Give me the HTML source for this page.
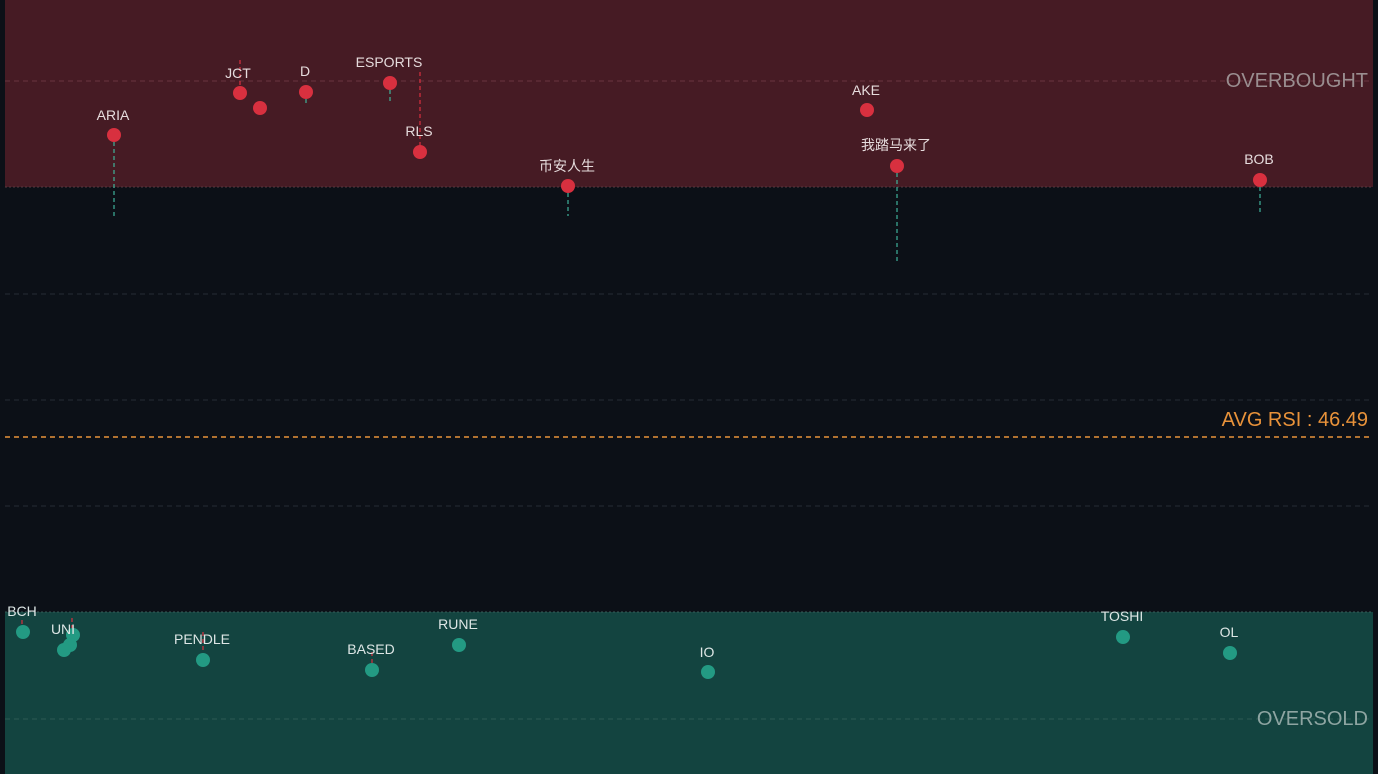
<!DOCTYPE html><html><head><meta charset="utf-8"><style>html,body{margin:0;padding:0;background:#0c1017;overflow:hidden}svg{display:block}text{font-family:"Liberation Sans","Noto Sans CJK SC",sans-serif}</style></head><body>
<svg width="1378" height="774" xmlns="http://www.w3.org/2000/svg">
<rect width="1378" height="774" fill="#0c1017"/>
<rect x="5" y="0" width="1368" height="187" fill="#461b24"/>
<line x1="5" y1="187" x2="1373" y2="187" stroke="#5a3a40" stroke-dasharray="2 2"/>
<rect x="5" y="612" width="1368" height="162" fill="#134440"/>
<line x1="5" y1="612" x2="1373" y2="612" stroke="#3a5e5a" stroke-dasharray="2 2"/>
<g stroke-dasharray="5 4" stroke-width="1">
<line x1="5" y1="81" x2="1373" y2="81" stroke="#6a3540"/>
<line x1="5" y1="294" x2="1373" y2="294" stroke="#262c34"/>
<line x1="5" y1="400" x2="1373" y2="400" stroke="#262c34"/>
<line x1="5" y1="506" x2="1373" y2="506" stroke="#262c34"/>
<line x1="5" y1="719" x2="1373" y2="719" stroke="#2d5a55"/>
<line x1="5" y1="437" x2="1373" y2="437" stroke="#e8923a" stroke-width="1.5"/>
</g>
<g font-size="20" text-anchor="end">
<text x="1368" y="87" fill="#9a8e90">OVERBOUGHT</text>
<text x="1368" y="426" fill="#e8923a">AVG RSI : 46.49</text>
<text x="1368" y="725" fill="#8ea5a2">OVERSOLD</text>
</g>
<g stroke-dasharray="4 3" stroke-width="1.2">
<line x1="114" y1="135" x2="114" y2="218" stroke="#3fb29a"/>
<line x1="568" y1="186" x2="568" y2="216" stroke="#3fb29a"/>
<line x1="897" y1="166" x2="897" y2="262" stroke="#3fb29a"/>
<line x1="1260" y1="180" x2="1260" y2="212" stroke="#3fb29a"/>
<line x1="306" y1="92" x2="306" y2="105" stroke="#3fb29a"/>
<line x1="390" y1="83" x2="390" y2="103" stroke="#3fb29a"/>
<line x1="420" y1="72" x2="420" y2="152" stroke="#d8303f"/>
<line x1="240" y1="60" x2="240" y2="93" stroke="#d8303f"/>
<line x1="22" y1="620" x2="22" y2="631" stroke="#d8303f"/>
<line x1="72" y1="618" x2="72" y2="645" stroke="#d8303f"/>
<line x1="203" y1="632" x2="203" y2="659" stroke="#d8303f"/>
<line x1="372" y1="652" x2="372" y2="669" stroke="#d8303f"/>
</g>
<g fill="#d8303f">
<circle cx="114" cy="135" r="7"/><circle cx="240" cy="93" r="7"/><circle cx="260" cy="108" r="7"/>
<circle cx="306" cy="92" r="7"/><circle cx="390" cy="83" r="7"/><circle cx="420" cy="152" r="7"/>
<circle cx="568" cy="186" r="7"/><circle cx="867" cy="110" r="7"/><circle cx="897" cy="166" r="7"/><circle cx="1260" cy="180" r="7"/>
</g>
<g fill="#239a83">
<circle cx="23" cy="632" r="7"/><circle cx="73" cy="635" r="7"/><circle cx="70" cy="645" r="7"/><circle cx="64" cy="650" r="7"/>
<circle cx="203" cy="660" r="7"/><circle cx="372" cy="670" r="7"/><circle cx="459" cy="645" r="7"/><circle cx="708" cy="672" r="7"/>
<circle cx="1123" cy="637" r="7"/><circle cx="1230" cy="653" r="7"/>
</g>
<g font-size="14" text-anchor="middle" fill="#e6dcdd">
<text x="113" y="120">ARIA</text><text x="238" y="78">JCT</text><text x="305" y="76">D</text>
<text x="389" y="67">ESPORTS</text><text x="419" y="136">RLS</text><text x="567" y="171">币安人生</text>
<text x="866" y="95">AKE</text><text x="896" y="150">我踏马来了</text><text x="1259" y="164">BOB</text>
</g>
<g font-size="14" text-anchor="middle" fill="#dde6e5">
<text x="22" y="616">BCH</text><text x="63" y="634">UNI</text><text x="202" y="644">PENDLE</text>
<text x="371" y="654">BASED</text><text x="458" y="629">RUNE</text><text x="707" y="657">IO</text>
<text x="1122" y="621">TOSHI</text><text x="1229" y="637">OL</text>
</g>
</svg></body></html>
